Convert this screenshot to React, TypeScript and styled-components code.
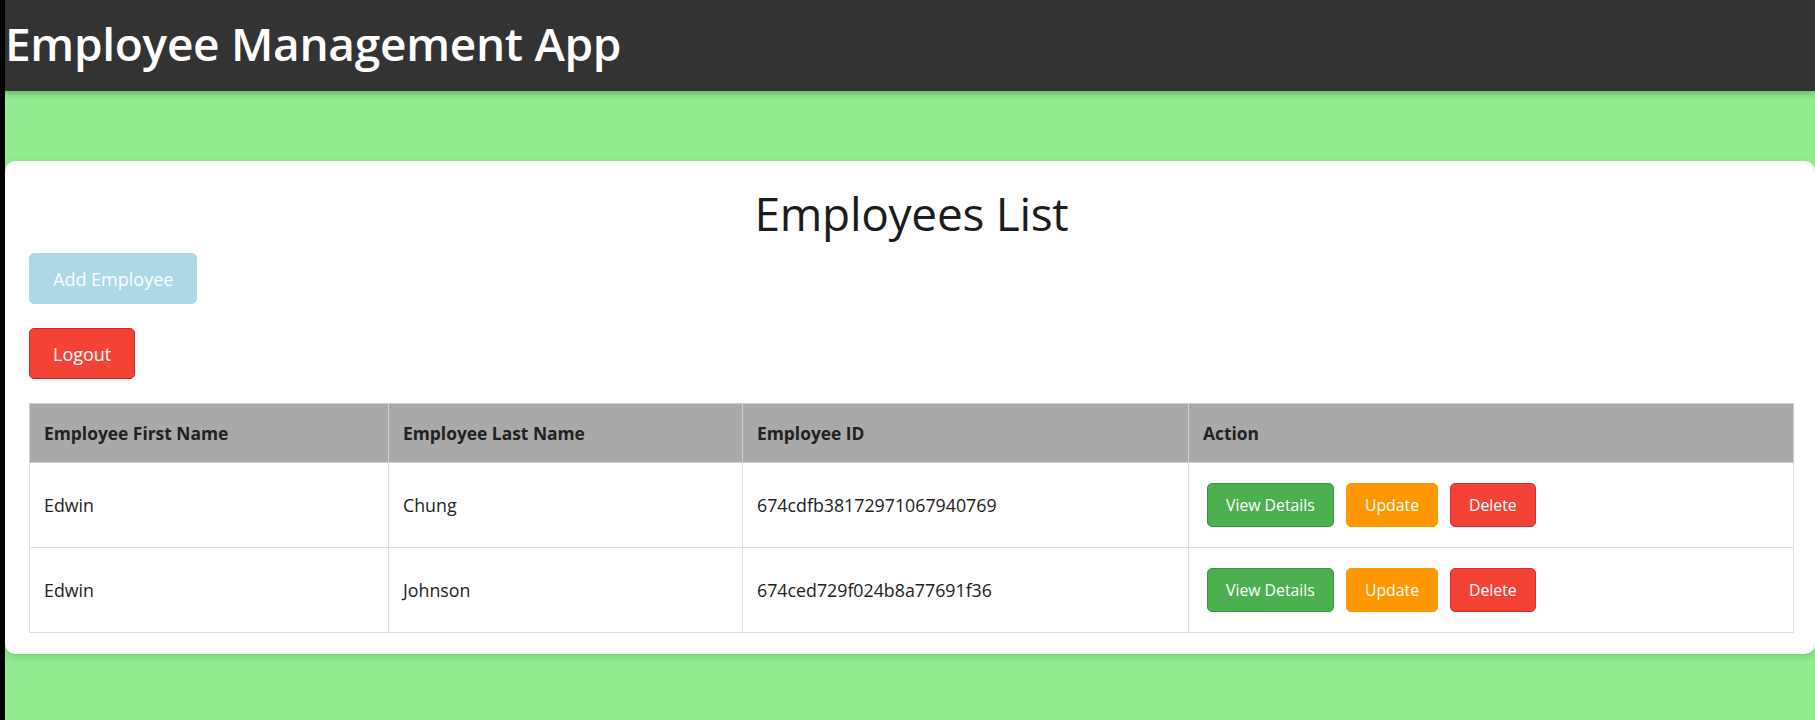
import React from "react";
import styled, { createGlobalStyle } from "styled-components";

type Employee = {
  id: string;
  firstName: string;
  lastName: string;
};

const employees: Employee[] = [
  { id: "674cdfb38172971067940769", firstName: "Edwin", lastName: "Chung" },
  { id: "674ced729f024b8a77691f36", firstName: "Edwin", lastName: "Johnson" },
];

const GlobalStyle = createGlobalStyle`
  html, body {
    margin: 0;
    padding: 0;
    background: #000;
  }
  body {
    font-family: "Open Sans", "Noto Sans", sans-serif;
  }
`;

export default function App() {
  return (
    <>
      <GlobalStyle />
      <Frame>
        <Header>
          <AppTitle>Employee Management App</AppTitle>
        </Header>
        <Main>
          <Card>
            <Heading>Employees List</Heading>
            <Toolbar>
              <ActionButton $bg="#add8e6" $size={18} $pad="0 23px" $h={51}>
                Add Employee
              </ActionButton>
              <ActionButton $bg="#f44336" $size={18} $pad="0 23px" $h={51} $border="#c62828">
                Logout
              </ActionButton>
            </Toolbar>
            <Table>
              <colgroup>
                <col style={{ width: 359 }} />
                <col style={{ width: 354 }} />
                <col style={{ width: 446 }} />
                <col />
              </colgroup>
              <thead>
                <tr>
                  <Th>Employee First Name</Th>
                  <Th>Employee Last Name</Th>
                  <Th>Employee ID</Th>
                  <Th>Action</Th>
                </tr>
              </thead>
              <tbody>
                {employees.map((e) => (
                  <tr key={e.id}>
                    <Td>{e.firstName}</Td>
                    <Td>{e.lastName}</Td>
                    <Td>{e.id}</Td>
                    <Td>
                      <RowActions>
                        <ActionButton $bg="#4caf50" $size={15.8} $pad="0 18px" $h={44} $border="#2e9e32">
                          View Details
                        </ActionButton>
                        <ActionButton $bg="#ff9800" $size={15.8} $pad="0 18px" $h={44}>
                          Update
                        </ActionButton>
                        <ActionButton $bg="#f44336" $size={15.8} $pad="0 18px" $h={44} $border="#d32f2f">
                          Delete
                        </ActionButton>
                      </RowActions>
                    </Td>
                  </tr>
                ))}
              </tbody>
            </Table>
          </Card>
        </Main>
      </Frame>
    </>
  );
}

const Frame = styled.div`
  margin-left: 5px;
  min-height: 720px;
  background: #90ee90;
  display: flex;
  flex-direction: column;
`;

const Header = styled.header`
  height: 91px;
  background: #333333;
  display: flex;
  align-items: center;
  padding-left: 0;
  box-shadow: 0 3px 6px rgba(0, 0, 0, 0.25);
  position: relative;
  z-index: 1;
`;

const AppTitle = styled.h1`
  margin: 0 0 6px;
  color: #ffffff;
  font-size: 46px;
  font-weight: 600;
  letter-spacing: -0.3px;
`;

const Main = styled.main`
  padding-top: 70px;
`;

const Card = styled.section`
  background: #ffffff;
  border-radius: 10px;
  box-shadow: 0 3px 8px rgba(0, 0, 0, 0.15);
  padding: 22px 21px 21px 24px;
  display: flex;
  flex-direction: column;
`;

const Heading = styled.h2`
  margin: 0 0 10px;
  text-align: center;
  color: #1c1c1c;
  font-size: 46px;
  font-weight: 500;
  letter-spacing: -0.3px;
  line-height: 60px;
`;

const Toolbar = styled.div`
  display: flex;
  flex-direction: column;
  align-items: flex-start;
  gap: 24px;
  margin-bottom: 24px;
`;

const ActionButton = styled.button<{ $bg: string; $size: number; $pad: string; $h: number; $border?: string }>`
  height: ${(p) => p.$h}px;
  padding: ${(p) => p.$pad};
  background: ${(p) => p.$bg};
  color: #ffffff;
  border: 1px solid ${(p) => p.$border ?? p.$bg};
  border-radius: 5px;
  font-family: "Open Sans", "Noto Sans", sans-serif;
  font-size: ${(p) => p.$size}px;
  cursor: pointer;
`;

const Table = styled.table`
  width: 100%;
  border-collapse: collapse;
  table-layout: fixed;
  border: 1px solid #dddddd;
`;

const Th = styled.th`
  height: 58px;
  padding: 0 14px;
  background: #a9a9a9;
  color: #222222;
  text-align: left;
  font-size: 17.4px;
  font-weight: 700;
  border: 1px solid #cfcfcf;
`;

const Td = styled.td`
  height: 84px;
  padding: 0 14px;
  color: #222222;
  font-size: 17.8px;
  border: 1px solid #dddddd;
`;

const RowActions = styled.div`
  display: flex;
  gap: 12px;
  padding-left: 4px;
`;
